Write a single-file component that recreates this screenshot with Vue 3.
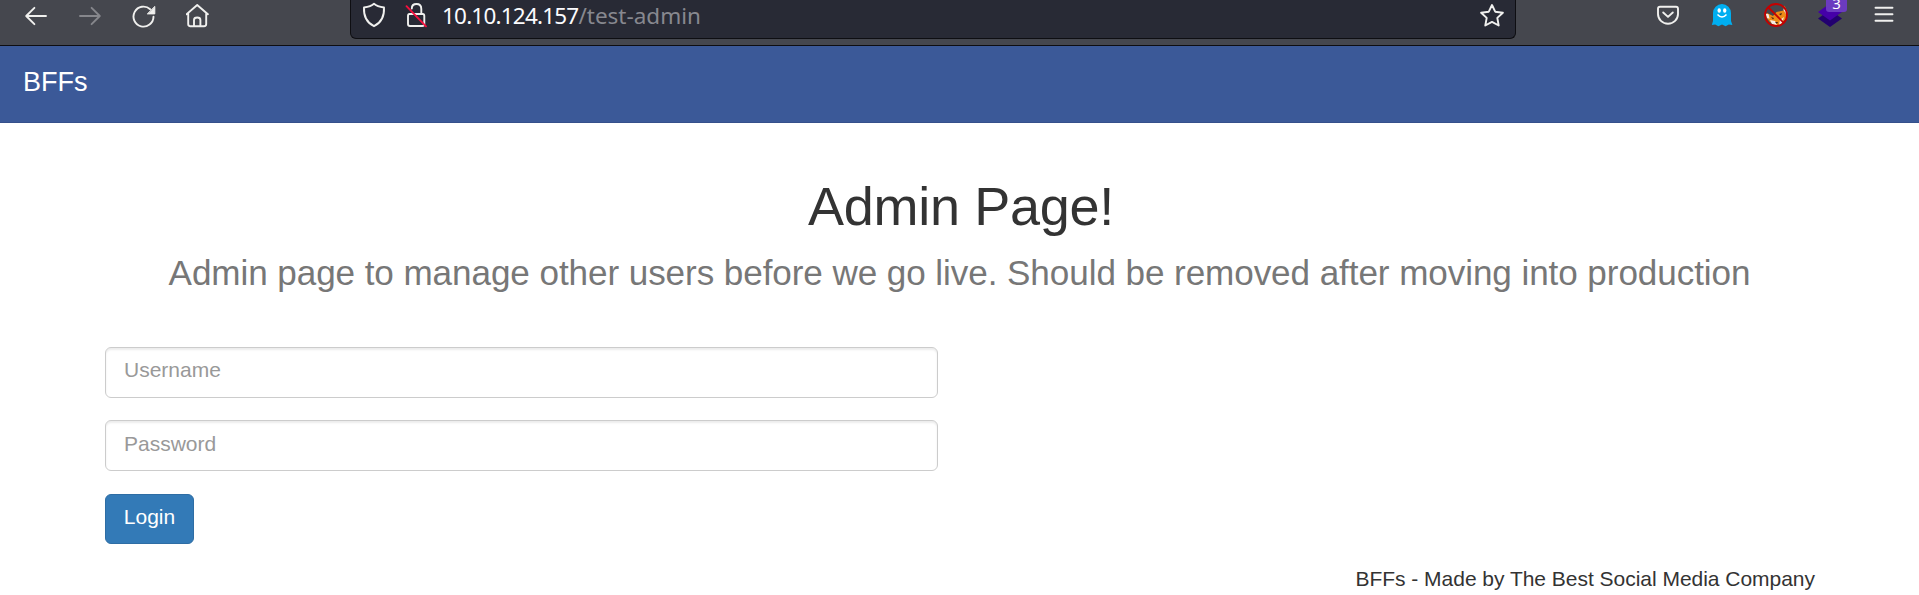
<script setup>
import { ref } from 'vue'

const username = ref('')
const password = ref('')
</script>

<template>
  <div class="window">
    <header class="toolbar">
      <nav class="controls">
        <svg width="24" height="26" viewBox="0 0 24 26"><path d="M22 16H2.3M10.4 7.8L2.2 16l8.2 8.2" /></svg>
        <svg class="dim" width="24" height="26" viewBox="0 0 24 26"><path d="M2 16h19.7M13.6 7.8l8.2 8.2-8.2 8.2" /></svg>
        <svg width="24" height="28" viewBox="0 0 24 28">
          <path d="M21.5 16.8A10 10 0 1 1 18.2 9.2" />
          <path class="solid" d="M22.8 6.8v7.1h-7.1z" />
        </svg>
        <svg width="24" height="28" viewBox="0.8 0 24 28">
          <path d="M1.3 14.2L12 5l10.7 9.2M3 13v11q0 2.2 2.2 2.2h13.6q2.2 0 2.2-2.2V13" />
          <path d="M8.8 26v-6q0-2.5 3.2-2.5t3.2 2.5v6" />
        </svg>
      </nav>

      <div class="address">
        <svg class="shield" width="24" height="29" viewBox="0 0 24 29">
          <path d="M12 3.7Q15 6.4 22 7.5Q22.7 21 12 26.2Q1.3 21 2 7.5Q9 6.4 12 3.7Z" />
        </svg>
        <svg class="lock" width="24" height="29" viewBox="0 0 24 29">
          <path d="M6.8 8.5Q6.8 4 11.5 4q4.8 0 4.8 5v5M4.5 14h13.3q1.5 0 1.5 2v8q0 2-2 2H5q-2 0-2-2v-8q0-2 1.5-2" />
          <path class="slash" d="M1.5 6.2L21 26.3" />
        </svg>
        <div class="url">10.10.124.157<span>/test-admin</span></div>
        <svg class="star" width="26" height="29" viewBox="0 0 26 29">
          <path d="M13 5l3.2 6.7 7.7 1-5.6 5.2 1.4 7.6-6.7-3.6-6.7 3.6 1.4-7.6-5.6-5.2 7.7-1z" />
        </svg>
      </div>

      <div class="extensions">
        <svg class="pocket" width="24" height="29" viewBox="0 0 24 29">
          <path d="M4 6.8h16q2 0 2 2v5.2a10 9.7 0 0 1-20 0V8.8q0-2 2-2Z" />
          <path d="M7.2 12.5l4.8 4.4 4.8-4.4" />
        </svg>
        <svg class="ghost" width="22" height="29" viewBox="0 0 22 29">
          <path fill="#00aef0" d="M2 13a9 9 0 0 1 18 0v8l1.4 4-3.6-.5-3.2 1.8-3.6-1.8-3.6 1.8-3.2-1.8L.8 25 2 21z" />
          <ellipse cx="8.2" cy="10.5" rx="1.7" ry="2.3" fill="#fff" />
          <ellipse cx="13.7" cy="10.5" rx="1.7" ry="2.3" fill="#fff" />
          <path d="M6.5 14.5q4.5 5 9 0" fill="none" stroke="#fff" stroke-width="1.5" />
        </svg>
        <svg class="fox" width="26" height="29" viewBox="0 0 26 29">
          <path fill="#ed8b17" d="M4 13l6 3 3.5-4 7-1.5 1-5 2.8 6-1.3 7-5 6-6.5 1-5-4-3-4z" />
          <path fill="#f5ede4" d="M2.6 13.5l3 .8 1 4.4-2.5-.7zM20.5 10l.6-3 2.4 3.5.3 5zM7 20l5 1 2 4-5-1zM17 20l4-3-2 6-3 2z" />
          <path fill="#422516" d="M8 17l3 1-1 1.5zM16 14l3-1-1 2.5zM12 22h3l-1 2z" />
          <circle cx="13" cy="15" r="11" fill="none" stroke="#c40000" stroke-width="1.8" />
          <path d="M5.4 7.5l15.3 15.3" stroke="#c40000" stroke-width="1.8" />
        </svg>
        <div class="layers">
          <svg width="26" height="29" viewBox="0 0 26 29">
            <path fill="#22006f" d="M1 18.5L13 10l12 8.5-12 8.5z" />
            <path fill="#4500a8" d="M1 12L13 3.5 25 12l-12 8.5z" />
          </svg>
          <b>3</b>
        </div>
        <svg class="menu" width="20" height="29" viewBox="0 0 20 29"><path d="M1.5 7.8h17M1.5 14.3h17M1.5 20.8h17" /></svg>
      </div>
    </header>

    <div class="navbar"><a>BFFs</a></div>

    <main>
      <h1>Admin Page!</h1>
      <p class="lead">Admin page to manage other users before we go live. Should be removed after moving into production</p>
      <form @submit.prevent>
        <input v-model="username" type="text" placeholder="Username" />
        <input v-model="password" class="password" type="password" placeholder="Password" />
        <button type="submit">Login</button>
      </form>
      <footer>BFFs - Made by The Best Social Media Company</footer>
    </main>
  </div>
</template>

<style>
body { margin: 0; overflow: hidden; }
</style>

<style scoped>
* { box-sizing: border-box; }
.window {
  height: 595px;
  overflow: hidden;
  background: #fff;
  color: #333;
  font-family: "Liberation Sans", Arial, sans-serif;
}
.toolbar {
  height: 46px;
  display: flex;
  align-items: flex-start;
  background: #45474e;
  border-bottom: 1px solid #0e0e12;
}
svg { display: block; flex: none; }
.controls { width: 350px; display: flex; gap: 30px; padding-left: 24px; }
.controls svg path, .shield path, .lock path, .star path, .pocket path, .menu path {
  fill: none;
  stroke: #f0f0ee;
  stroke-width: 1.9;
  stroke-linecap: round;
  stroke-linejoin: round;
}
.controls svg.dim path { stroke: #86878c; }
.controls svg .solid { fill: #f0f0ee; stroke-width: 1; }
.lock .slash { stroke: #f5103e; }
.address {
  width: 1166px;
  height: 39px;
  display: flex;
  background: #282a35;
  border: 1px solid #0e0e12;
  border-top: 0;
  border-radius: 0 0 6px 6px;
  padding-left: 11px;
}
.lock { margin-left: 19px; }
.url {
  margin-left: 13px;
  height: 32px;
  line-height: 32px;
  white-space: nowrap;
  font-family: "Noto Sans", sans-serif;
  font-size: 22.5px;
  letter-spacing: -0.8px;
  color: #fbfbfe;
}
.url span { color: #87888f; letter-spacing: 0; }
.star { margin-left: auto; margin-right: 10px; }
.extensions { display: flex; padding-left: 140px; }
.ghost { margin-left: 31px; }
.fox { margin-left: 30px; }
.layers { position: relative; margin-left: 28px; }
.layers b {
  position: absolute;
  left: 9px;
  top: -8px;
  width: 21px;
  height: 20px;
  border-radius: 3px;
  background: #6b3bc0;
  color: #fff;
  font: 15px/23px "Noto Sans", sans-serif;
  text-align: center;
}
.menu { margin-left: 31px; }
.navbar {
  height: 77px;
  padding: 21px 23px;
  background: #3b5998;
  border-bottom: 1px solid #35508b;
  color: #fff;
  font-size: 27px;
  line-height: 30px;
}
main { padding: 54px 105px 0; }
h1 {
  margin: 0;
  padding-left: 3px;
  font-size: 54px;
  font-weight: 400;
  line-height: 59px;
  letter-spacing: -0.3px;
  text-align: center;
}
.lead {
  margin: 17px -40px 0;
  font-size: 35.1px;
  line-height: 39px;
  letter-spacing: -0.075px;
  color: #777;
  text-align: center;
  white-space: nowrap;
}
form { margin-top: 55px; width: 833px; display: flex; flex-direction: column; align-items: flex-start; }
input {
  display: block;
  width: 100%;
  height: 51px;
  margin: 0 0 22px;
  padding: 5px 18px 10px;
  border: 1px solid #ccc;
  border-radius: 6px;
  background: #fff;
  box-shadow: inset 0 2px 2px rgba(0, 0, 0, 0.075);
  color: #555;
  font: 21px/30px "Liberation Sans", Arial, sans-serif;
  outline: none;
}
input::placeholder { color: #999; opacity: 1; }
.password { padding-top: 6px; padding-bottom: 9px; }
button {
  width: 89px;
  height: 50px;
  margin: 1px 0 0;
  padding: 0 0 4px;
  border: 1px solid #2e6da4;
  border-radius: 6px;
  background: #337ab7;
  color: #fff;
  font: 21px/30px "Liberation Sans", Arial, sans-serif;
}
footer { margin: 20px -1px 0 0; font-size: 21px; line-height: 30px; letter-spacing: -0.025px; text-align: right; }
</style>
